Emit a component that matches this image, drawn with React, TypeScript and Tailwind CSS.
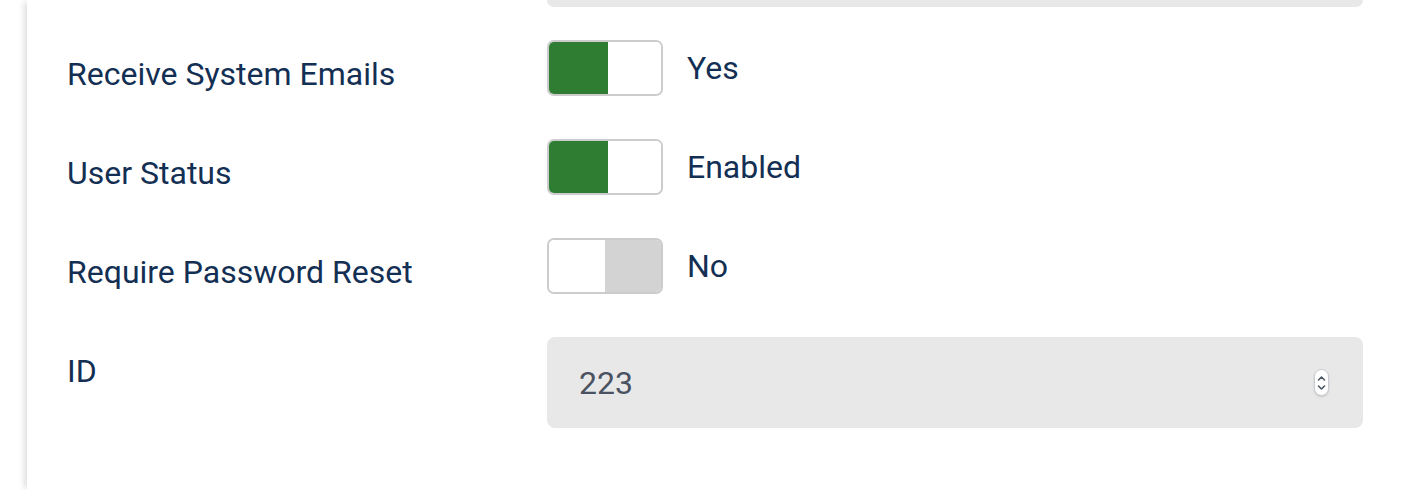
import React from "react";

function Toggle({ on }: { on: boolean }) {
  return (
    <div className="flex h-[56px] w-[116px] overflow-hidden rounded-[7px] border-2 border-[#cccccc] bg-white">
      {on ? (
        <>
          <div className="h-full w-[59px] bg-[#2e7d32]" />
          <div className="h-full flex-1 bg-white" />
        </>
      ) : (
        <>
          <div className="h-full w-[56px] bg-white" />
          <div className="h-full flex-1 bg-[#d3d3d3]" />
        </>
      )}
    </div>
  );
}

function Row({ label, children }: { label: string; children: React.ReactNode }) {
  return (
    <div className="flex">
      <div className="w-[480px] pt-[16px] text-[32px] leading-[36px] text-[#132f53]">{label}</div>
      {children}
    </div>
  );
}

export default function App() {
  return (
    <div
      className="flex h-[490px] w-[1412px] overflow-hidden bg-white"
      style={{ fontFamily: "Roboto, 'Noto Sans', sans-serif" }}
    >
      <div className="w-[27px] shrink-0 bg-white" />
      <div className="flex-1 bg-white shadow-[-5px_0_6px_-2px_rgba(0,0,0,0.13)]">
        <div className="pl-[40px] pr-[49px]">
          <div className="ml-[480px] h-[7px] rounded-b-[8px] bg-[#e8e8e8]" />
          <div className="mt-[33px] flex flex-col gap-[43px]">
            <Row label="Receive System Emails">
              <div className="flex items-center gap-[24px]">
                <Toggle on />
                <span className="text-[32px] text-[#132f53]">Yes</span>
              </div>
            </Row>
            <Row label="User Status">
              <div className="flex items-center gap-[24px]">
                <Toggle on />
                <span className="text-[32px] text-[#132f53]">Enabled</span>
              </div>
            </Row>
            <Row label="Require Password Reset">
              <div className="flex items-center gap-[24px]">
                <Toggle on={false} />
                <span className="text-[32px] text-[#132f53]">No</span>
              </div>
            </Row>
            <Row label="ID">
              <div className="flex h-[91px] flex-1 items-center justify-between rounded-[8px] bg-[#e8e8e8] pl-[32px] pr-[34px]">
                <span className="text-[32px] text-[#4a5262]">223</span>
                <div className="flex h-[27px] w-[15px] flex-col items-center justify-center rounded-full border border-[#c8ccd2] bg-white shadow-[0_1px_2px_rgba(0,0,0,0.15)]">
                  <svg width="9" height="18" viewBox="0 0 9 18" fill="none" stroke="#4b5563" strokeWidth="1.6" strokeLinecap="round" strokeLinejoin="round">
                    <path d="M1.5 6 L4.5 3 L7.5 6" />
                    <path d="M1.5 12 L4.5 15 L7.5 12" />
                  </svg>
                </div>
              </div>
            </Row>
          </div>
        </div>
      </div>
    </div>
  );
}
